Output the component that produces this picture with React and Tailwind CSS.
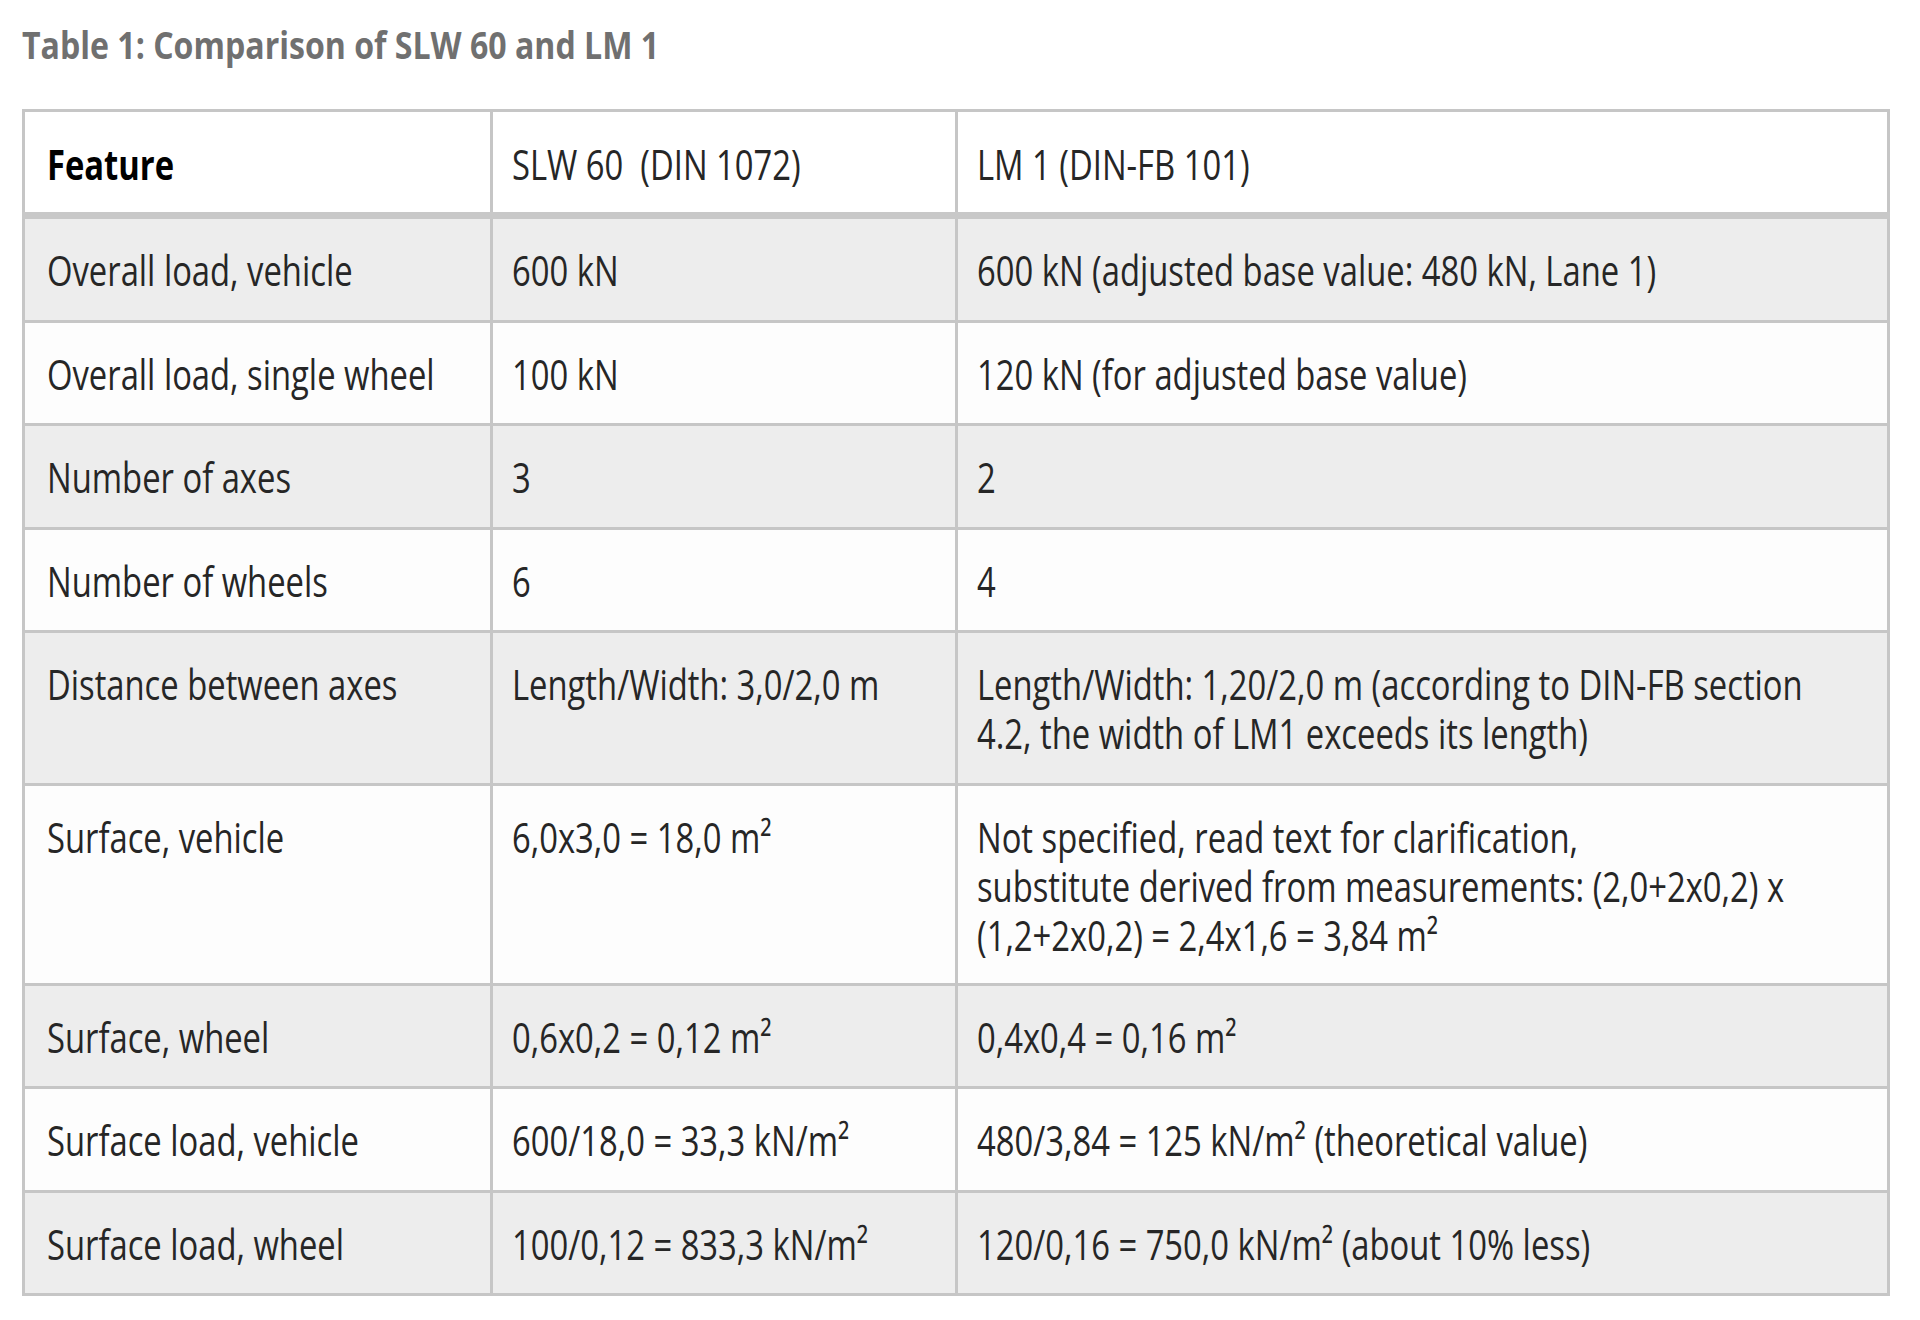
const rows = [
  { feature: "Overall load, vehicle", slw: "600 kN", lm: ["600 kN (adjusted base value: 480 kN, Lane 1)"] },
  { feature: "Overall load, single wheel", slw: "100 kN", lm: ["120 kN (for adjusted base value)"] },
  { feature: "Number of axes", slw: "3", lm: ["2"] },
  { feature: "Number of wheels", slw: "6", lm: ["4"] },
  {
    feature: "Distance between axes",
    slw: "Length/Width: 3,0/2,0 m",
    lm: ["Length/Width: 1,20/2,0 m (according to DIN-FB section", "4.2, the width of LM1 exceeds its length)"],
  },
  {
    feature: "Surface, vehicle",
    slw: "6,0x3,0 = 18,0 m²",
    lm: [
      "Not specified, read text for clarification,",
      "substitute derived from measurements: (2,0+2x0,2) x",
      "(1,2+2x0,2) = 2,4x1,6 = 3,84 m²",
    ],
  },
  { feature: "Surface, wheel", slw: "0,6x0,2 = 0,12 m²", lm: ["0,4x0,4 = 0,16 m²"] },
  { feature: "Surface load, vehicle", slw: "600/18,0 = 33,3 kN/m²", lm: ["480/3,84 = 125 kN/m² (theoretical value)"] },
  { feature: "Surface load, wheel", slw: "100/0,12 = 833,3 kN/m²", lm: ["120/0,16 = 750,0 kN/m² (about 10% less)"] },
];

// the source uses a condensed face, so squeeze Open Sans horizontally
function Narrow({ children }) {
  return <span className="inline-block origin-left scale-x-[0.78] whitespace-pre">{children}</span>;
}

const cell = "border-[3px] border-[#c6c6c6] pl-[22px] pr-[8px] align-top text-left whitespace-nowrap";

export default function App() {
  return (
    <div className="min-h-screen overflow-hidden bg-white px-[22px] pt-[23px] font-['Open_Sans','Liberation_Sans',sans-serif]">
      {/* caption */}
      <h1 className="text-[37px] leading-[44px] font-bold text-[#707070]">
        <span className="inline-block origin-left scale-x-[0.867] whitespace-nowrap">Table 1: Comparison of SLW 60 and LM 1</span>
      </h1>

      <table className="mt-[42px] w-[1865px] table-fixed border-collapse border-[3px] border-[#c6c6c6] text-[42px] leading-[49px] text-[#262626]">
        <colgroup>
          <col className="w-[468px]" />
          <col className="w-[465px]" />
          <col className="w-[932px]" />
        </colgroup>
        <thead>
          <tr className="bg-white">
            <th className={`${cell} border-b-[7px] border-b-[#c8c8c8] pt-[27px] pb-[24px] font-bold text-black`}>
              <Narrow>Feature</Narrow>
            </th>
            <th className={`${cell} !pl-[19px] border-b-[7px] border-b-[#c8c8c8] pt-[27px] pb-[24px] font-normal`}>
              <Narrow>SLW 60  (DIN 1072)</Narrow>
            </th>
            <th className={`${cell} !pl-[19px] border-b-[7px] border-b-[#c8c8c8] pt-[27px] pb-[24px] font-normal`}>
              <Narrow>LM 1 (DIN-FB 101)</Narrow>
            </th>
          </tr>
        </thead>
        <tbody>
          {rows.map((r, i) => {
            const pad = r.lm.length > 2 ? "pt-[26px] pb-[24px]" : "pt-[26px] pb-[25.5px]";
            return (
              <tr key={r.feature} className={i % 2 === 0 ? "bg-[#ededed]" : "bg-[#fdfdfd]"}>
                <td className={`${cell} ${pad}`}>
                  <Narrow>{r.feature}</Narrow>
                </td>
                <td className={`${cell} !pl-[19px] ${pad}`}>
                  <Narrow>{r.slw}</Narrow>
                </td>
                <td className={`${cell} !pl-[19px] ${pad}`}>
                  {r.lm.map((line) => (
                    <div key={line}>
                      <Narrow>{line}</Narrow>
                    </div>
                  ))}
                </td>
              </tr>
            );
          })}
        </tbody>
      </table>
    </div>
  );
}
